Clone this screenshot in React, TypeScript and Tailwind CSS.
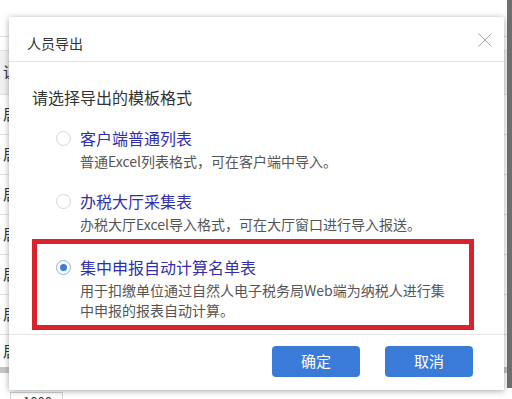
const font = "font-['Microsoft_YaHei','Noto_Sans_CJK_SC',sans-serif]";

const options = [
  { title: "客户端普通列表", desc: "普通Excel列表格式，可在客户端中导入。" },
  { title: "办税大厅采集表", desc: "办税大厅Excel导入格式，可在大厅窗口进行导入报送。" },
  {
    title: "集中申报自动计算名单表",
    desc: "用于扣缴单位通过自然人电子税务局Web端为纳税人进行集中申报的报表自动计算。",
  },
];

const Radio = ({ checked }: { checked: boolean }) => (
  <span
    className={
      checked
        ? "flex h-[15px] w-[15px] shrink-0 items-center justify-center rounded-full border border-[#8fb0e6] bg-white"
        : "flex h-[15px] w-[15px] shrink-0 items-center justify-center rounded-full border border-[#d6d6d6] bg-white"
    }
  >
    {checked && <span className="h-[7px] w-[7px] rounded-full bg-[#3f7ce0]" />}
  </span>
);

// table peeking out from behind the dialog
const Cell = ({ text }: { text: string }) => (
  <span className="block w-[9px] overflow-hidden whitespace-nowrap pl-[3px] text-[15px] text-[#333]">{text}</span>
);

const Background = () => (
  <div className="flex h-full w-full">
    <div className="flex-1">
      <div className="h-[36px]" />
      <div className="h-[14px] border-t border-[#e2e2e2]" />
      <div className="flex h-[45px] items-center border-y border-[#e2e2e2] bg-[#f0f1f3]">
        <Cell text="证件类型" />
      </div>
      {[0, 1, 2, 3, 4, 5].map((i) => (
        <div key={i} className="flex h-[40px] items-center border-b border-[#e2e2e2]">
          <Cell text="居民身份证" />
        </div>
      ))}
      <div className="flex h-[32px] items-center">
        <Cell text="居民身份证" />
      </div>
      <div className="h-[6px] bg-[#c4c4c4]" />
      <div className="h-[19px]" />
      <div className="ml-[10px] w-[53px] border border-[#d4d4d4] pl-[12px] text-[13px] leading-[18px] text-[#333]">
        1000
      </div>
    </div>
    <div className="h-[388px] w-[5px] bg-[#6f6f6f]" />
  </div>
);

export default function App() {
  return (
    <div className={`relative h-[399px] w-[512px] overflow-hidden bg-white ${font}`}>
      <Background />

      <div className="absolute left-[9px] top-[17px] flex h-[373px] w-[495px] flex-col bg-white shadow-[0_1px_6px_rgba(0,0,0,0.35)]">
        <div className="flex h-[45px] items-start justify-between border-b border-[#e5e5e5] pl-[18px] pr-[12px]">
          <span className="mt-[16px] text-[14px] leading-[20px] text-[#333]">人员导出</span>
          <svg className="mt-[16px]" width="14" height="14" viewBox="0 0 14 14" fill="none">
            <path d="M0.5 0.5L13.5 13.5M13.5 0.5L0.5 13.5" stroke="#a8a8a8" strokeWidth="1" />
          </svg>
        </div>

        <div className="flex flex-col pb-[4px] pl-[23px] pr-[30px]">
          <p className="mt-[23px] text-[16px] leading-[24px] text-[#333]">请选择导出的模板格式</p>

          {options.map((opt, i) => {
            const selected = i === 2;
            return (
              <div
                key={opt.title}
                className={
                  selected
                    ? "mt-[5px] border-[5px] border-[#d8222c] pb-[5px] pl-[19px] pt-[11px]"
                    : i === 0
                      ? "mt-[1px] pl-[24px] pt-[16px]"
                      : "mt-[2px] pl-[24px] pt-[16px]"
                }
              >
                <div className="flex items-center gap-[9px]">
                  <Radio checked={selected} />
                  <span className="text-[16px] leading-[24px] text-[#2f2fae]">{opt.title}</span>
                </div>
                <p className="mt-[1px] w-[396px] pl-[24px] text-[14px] leading-[20px] text-[#555]">{opt.desc}</p>
              </div>
            );
          })}
        </div>

        <div className="flex justify-end gap-[25px] border-t border-[#e5e5e5] pr-[31px] pt-[11px]">
          <button className="h-[31px] w-[88px] rounded-[4px] bg-[#3a7bd8] text-[15px] text-white">确定</button>
          <button className="h-[31px] w-[88px] rounded-[4px] bg-[#3a7bd8] text-[15px] text-white">取消</button>
        </div>
      </div>
    </div>
  );
}
